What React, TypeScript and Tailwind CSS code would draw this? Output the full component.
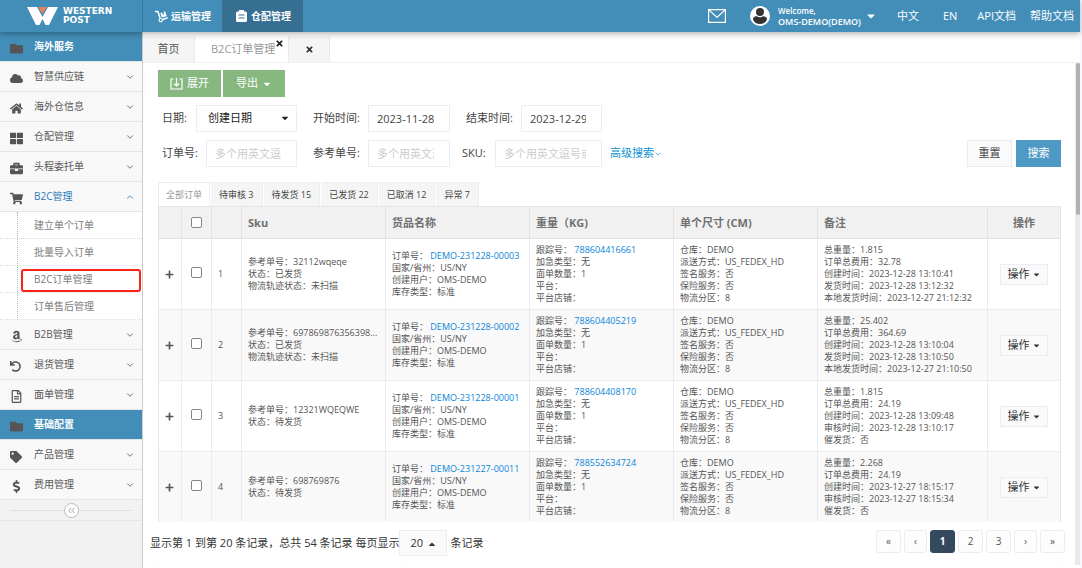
import type { ReactNode } from "react";
import {
  FaAmazon,
  FaBriefcase,
  FaCaretDown,
  FaCaretUp,
  FaCloud,
  FaDollarSign,
  FaDolly,
  FaFolder,
  FaHome,
  FaPlus,
  FaRegFileAlt,
  FaShoppingCart,
  FaTag,
  FaThLarge,
  FaTimes,
  FaUndo,
} from "react-icons/fa";
import { ChevronDown, ChevronUp, ChevronsLeft } from "lucide-react";

type Order = {
  ref: string;
  status: string;
  track?: string;
  no?: string;
  tracking?: string;
  remark: string[];
};

const orders: Order[] = [
  {
    ref: "32112wqeqe",
    status: "已发货",
    track: "未扫描",
    no: "DEMO-231228-00003",
    tracking: "788604416661",
    remark: [
      "总重量：1.815",
      "订单总费用：32.78",
      "创建时间：2023-12-28 13:10:41",
      "发货时间：2023-12-28 13:12:32",
      "本地发货时间：2023-12-27 21:12:32",
    ],
  },
  {
    ref: "697869876356398...",
    status: "已发货",
    track: "未扫描",
    no: "DEMO-231228-00002",
    tracking: "788604405219",
    remark: [
      "总重量：25.402",
      "订单总费用：364.69",
      "创建时间：2023-12-28 13:10:04",
      "发货时间：2023-12-28 13:10:50",
      "本地发货时间：2023-12-27 21:10:50",
    ],
  },
  {
    ref: "12321WQEQWE",
    status: "待发货",
    no: "DEMO-231228-00001",
    tracking: "788604408170",
    remark: [
      "总重量：1.815",
      "订单总费用：24.19",
      "创建时间：2023-12-28 13:09:48",
      "审核时间：2023-12-28 13:10:17",
      "催发货：否",
    ],
  },
  {
    ref: "698769876",
    status: "待发货",
    no: "DEMO-231227-00011",
    tracking: "788552634724",
    remark: [
      "总重量：2.268",
      "订单总费用：24.19",
      "创建时间：2023-12-27 18:15:17",
      "审核时间：2023-12-27 18:15:34",
      "催发货：否",
    ],
  },
  // 异常订单，尚未生成面单
  { ref: "698769", status: "异常", remark: [] },
];

const subMenu = ["建立单个订单", "批量导入订单", "B2C订单管理", "订单售后管理"];

const statusTabs = ["全部订单", "待审核 3", "待发货 15", "已发货 22", "已取消 12", "异常 7"];

const pages = ["«", "‹", "1", "2", "3", "›", "»"];

function Logo() {
  return (
    <svg width="31" height="18" viewBox="0 0 31 18">
      <path d="M0 0H10L15.5 10L21 0H31L22 18H18.5L15.5 12L12.5 18H9Z" fill="#fff" />
      <path d="M11.3 0H19.7L15.5 7Z" fill="#f07f55" />
    </svg>
  );
}

function ClipboardIcon() {
  return (
    <svg width="11" height="12" viewBox="0 0 11 12">
      <path d="M3 0h5v1.5h1.5A1.5 1.5 0 0 1 11 3v7.5A1.5 1.5 0 0 1 9.5 12h-8A1.5 1.5 0 0 1 0 10.5V3a1.5 1.5 0 0 1 1.500-1.500H3z" fill="#fff" />
      <path d="M2.5 5h6M2.5 8h6" stroke="#376f93" />
    </svg>
  );
}

function ExpandIcon() {
  return (
    <svg width="13" height="12" viewBox="0 0 13 12" fill="none" stroke="#fff" strokeWidth="1.2">
      <path d="M3.5 1H1v10h11V1H9.5M6.500 0v8M4 5.5l2.500 2.500L9 5.5" />
    </svg>
  );
}

function MailIcon() {
  return (
    <svg width="18" height="14" viewBox="0 0 18 14" fill="none" stroke="#fff" strokeWidth="1.2">
      <path d="M.6.6h16.8v12.8H.6zM.6.6L9 8.500L17.400.6" />
    </svg>
  );
}

function Avatar() {
  return (
    <svg width="20" height="20" viewBox="0 0 20 20">
      <circle cx="10" cy="10" r="10" fill="#fff" />
      <circle cx="10" cy="6" r="4" fill="#333" />
      <path d="M3 13.5C3 11 5.500 10.300 7 10.300C8.500 11.500 11.500 11.500 13 10.300C14.500 10.300 17 11 17 13.500C16 16.500 13 18 10 18S4 16.500 3 13.500Z" fill="#333" />
    </svg>
  );
}

function MenuItem({ icon, label, open }: { icon: ReactNode; label: string; open?: boolean }) {
  return (
    <button
      className={`flex h-[30px] w-full items-center border-b border-[#e5e5e5] bg-[#f8f8f8] pr-[7px] pl-[10px] text-left ${
        open ? "text-[#2b7dbc]" : "text-[#585858]"
      }`}
    >
      <span className="flex w-6 items-center pt-1 text-[13px] text-[#555]">{icon}</span>
      <span className="flex-1">{label}</span>
      {open ? <ChevronUp size={10} /> : <ChevronDown size={10} />}
    </button>
  );
}

function MenuTitle({ label }: { label: string }) {
  return (
    <div className="flex h-[30px] items-center border-b border-[#e5e5e5] bg-[#438eb9] pl-[10px] font-bold text-white">
      <span className="w-6 pt-1 text-[13px] text-[#555]">
        <FaFolder />
      </span>
      {label}
    </div>
  );
}

function Sidebar() {
  return (
    <aside className="w-[143px] shrink-0 border-r border-[#ccc] bg-[#f2f2f2] text-[10px]">
      <MenuTitle label="海外服务" />
      <MenuItem icon={<FaCloud />} label="智慧供应链" />
      <MenuItem icon={<FaHome />} label="海外仓信息" />
      <MenuItem icon={<FaThLarge />} label="仓配管理" />
      <MenuItem icon={<FaBriefcase />} label="头程委托单" />
      <MenuItem icon={<FaShoppingCart />} label="B2C管理" open />
      <ul className="relative bg-white">
        {subMenu.map((name) => (
          <li key={name} className="relative h-[27px] border-b border-dotted border-[#d5dde5]">
            <a href="#" className="flex h-full items-center pl-[34px] text-[#7d7d7d]">
              {name}
            </a>
            {/* 当前菜单高亮框 */}
            {name === "B2C订单管理" && (
              <span className="pointer-events-none absolute top-[3px] right-px bottom-0 left-[21px] rounded-[3px] border-2 border-[#fb2318]" />
            )}
          </li>
        ))}
        <li aria-hidden="true" className="absolute top-0 bottom-0 left-[17px] border-l border-dotted border-[#9dbdd6]" />
      </ul>
      <MenuItem icon={<FaAmazon />} label="B2B管理" />
      <MenuItem icon={<FaUndo size={11} />} label="退货管理" />
      <MenuItem icon={<FaRegFileAlt />} label="面单管理" />
      <MenuTitle label="基础配置" />
      <MenuItem icon={<FaTag size={12} />} label="产品管理" />
      <MenuItem icon={<FaDollarSign />} label="费用管理" />
      <div className="flex h-[21px] items-center border-b border-[#e5e5e5] px-[11px]">
        <span className="h-px flex-1 bg-[#ddd]" />
        <button aria-label="收起" className="flex size-[15px] items-center justify-center rounded-full border border-[#bbb] bg-white text-[#999]">
          <ChevronsLeft size={11} />
        </button>
        <span className="h-px flex-1 bg-[#ddd]" />
      </div>
    </aside>
  );
}

function Header() {
  return (
    <header className="relative z-20 flex h-8 shrink-0 items-center bg-[#438eb9] text-[11px] text-white shadow-[0_2px_6px_rgba(0,0,0,0.3)]">
      <div className="flex h-full w-[142px] shrink-0 items-center gap-[5px] pl-[27px]">
        <Logo />
        <span className="font-['DejaVu_Sans',sans-serif] text-[9px] leading-[9px] font-bold">
          WESTERN
          <br />
          POST
        </span>
      </div>
      <nav className="flex h-full text-[10px] font-bold">
        <a href="#" className="flex items-center gap-[3px] border-l border-[#3579a0] pr-[11px] pl-3">
          <FaDolly size={13} />
          运输管理
        </a>
        <a href="#" className="flex items-center gap-1 bg-[#376f93] pr-3 pl-[14px]">
          <ClipboardIcon />
          仓配管理
        </a>
      </nav>
      <div className="ml-auto flex h-full items-center pr-[6px] whitespace-nowrap">
        <button aria-label="消息">
          <MailIcon />
        </button>
        <button className="ml-6 flex items-center text-left">
          <Avatar />
          <span className="ml-2 text-[9px] leading-[11px] font-semibold">
            <span className="block text-[8px]">Welcome,</span>
            OMS-DEMO(DEMO)
          </span>
          <FaCaretDown size={12} className="ml-1" />
        </button>
        <a href="#" className="ml-5">中文</a>
        <a href="#" className="ml-6">EN</a>
        <a href="#" className="ml-5">API文档</a>
        <a href="#" className="ml-[14px]">帮助文档</a>
      </div>
    </header>
  );
}

function PageTabs() {
  return (
    <div className="flex h-[31px] shrink-0 items-end border-b border-[#eef0f8] bg-white text-[11px]">
      <button className="h-[26px] w-[52px] border-r border-[#e8eaf2] bg-[#f5f5f5] text-[#555]">首页</button>
      <button className="relative ml-px h-[26px] border-r border-[#e8eaf2] bg-white pr-[13px] pl-[15px] text-[#999]">
        B2C订单管理
        <FaTimes size={9} className="absolute top-[3px] right-1 text-[#222]" />
      </button>
      <button aria-label="关闭" className="flex h-[26px] w-[41px] items-center justify-center border-r border-[#e8eaf2] bg-[#f5f5f5] text-[#333]">
        <FaTimes size={9} />
      </button>
    </div>
  );
}

function Field({ id, label, value, width, gap }: { id: string; label: string; value?: string; width: string; gap: string }) {
  return (
    <div className={`flex items-center justify-between ${gap}`}>
      <label htmlFor={id}>{label}</label>
      <input
        id={id}
        defaultValue={value}
        placeholder="多个用英文逗号或空格隔开"
        className={`h-[27px] border border-[#ececf5] bg-white pr-[15px] pl-2 text-[#444] placeholder:text-[#ccc] ${width}`}
      />
    </div>
  );
}

function Filters() {
  return (
    <form className="text-[11px] text-[#444]">
      <div className="flex gap-[2px]">
        <button type="button" className="flex h-[27px] w-[63px] items-center justify-center gap-1 bg-[#87b87f] text-white">
          <ExpandIcon />
          展开
        </button>
        <button type="button" className="flex h-[27px] w-[62px] items-center justify-center gap-1 bg-[#87b87f] text-white">
          导出
          <FaCaretDown size={10} />
        </button>
      </div>
      <div className="mt-2 flex gap-4 pl-1">
        <div className="flex w-[135px] items-center justify-between">
          <label htmlFor="dateType">日期:</label>
          <div className="relative">
            <select id="dateType" className="h-[27px] w-[101px] appearance-none border border-[#ececf5] bg-white pl-[11px] text-[#222]">
              <option>创建日期</option>
            </select>
            <FaCaretDown size={10} className="pointer-events-none absolute top-2 right-[7px] text-[#222]" />
          </div>
        </div>
        <Field id="from" label="开始时间:" value="2023-11-28" width="w-[82px]" gap="w-[137px]" />
        <Field id="to" label="结束时间:" value="2023-12-29" width="w-[81px]" gap="w-[136px]" />
      </div>
      <div className="mt-2 flex items-center pl-1">
        <Field id="orderNo" label="订单号:" width="w-[91px]" gap="mr-4 w-[135px]" />
        <Field id="refNo" label="参考单号:" width="w-[82px]" gap="mr-3 w-[137px]" />
        <Field id="sku" label="SKU:" width="w-[107px]" gap="w-[140px]" />
        <a href="#" className="ml-2 flex items-center text-[#0a93cf]">
          高级搜索
          <ChevronDown size={8} />
        </a>
        <div className="ml-auto flex gap-1">
          <button type="reset" className="h-[27px] w-[45px] border border-[#ececf0] bg-[#fafafa]">重置</button>
          <button type="button" className="h-[27px] w-[45px] bg-[#4f99c6] text-white">搜索</button>
        </div>
      </div>
    </form>
  );
}

function CheckBox({ label }: { label: string }) {
  return (
    <input
      type="checkbox"
      aria-label={label}
      className="block size-[11px] appearance-none rounded-[2px] border border-[#858585] bg-white"
    />
  );
}

function OrderRow({ order, index }: { order: Order; index: number }) {
  const cell = "border-r border-b border-[#ececf0] px-[6px]";
  const failed = order.status === "异常";
  return (
    <tr className={`odd:bg-white even:bg-[#f9f9f9] ${failed ? "h-[107px]" : "h-[71px]"}`}>
      <td className={cell}>
        <button aria-label="展开明细" className="block">
          <FaPlus size={9} />
        </button>
      </td>
      <td className="border-r border-b border-[#ececf0] pb-1 pl-[9px]">
        <CheckBox label={`选择第 ${index + 1} 行`} />
      </td>
      <td className={cell}>{index + 1}</td>
      <td className={`${cell} whitespace-nowrap ${failed ? "text-red-500" : ""}`}>
        <div>参考单号：{order.ref}</div>
        <div>状态：{order.status}</div>
        {order.track && <div>物流轨迹状态：{order.track}</div>}
      </td>
      <td className={`${cell} whitespace-nowrap`}>
        {order.no && (
          <>
            <div>
              订单号： <a href="#" className="text-[#0a85d9]">{order.no}</a>
            </div>
            <div>国家/省州：US/NY</div>
          </>
        )}
        <div>创建用户：OMS-DEMO</div>
        <div>库存类型：标准</div>
      </td>
      <td className={cell}>
        {order.tracking && (
          <>
            <div>
              跟踪号： <a href="#" className="text-[#0a85d9]">{order.tracking}</a>
            </div>
            <div>加急类型：无</div>
            <div>面单数量：1</div>
            <div>平台：</div>
            <div>平台店铺：</div>
          </>
        )}
      </td>
      <td className={cell}>
        {order.tracking && (
          <>
            <div>仓库：DEMO</div>
            <div>派送方式：US_FEDEX_HD</div>
            <div>签名服务：否</div>
            <div>保险服务：否</div>
            <div>物流分区：8</div>
          </>
        )}
      </td>
      <td className={`${cell} whitespace-nowrap`}>
        {order.remark.map((line) => (
          <div key={line}>{line}</div>
        ))}
      </td>
      <td className="border-b border-[#ececf0]">
        <button className="mx-auto flex h-[21px] w-12 items-center justify-center gap-[2px] border border-[#ececf5] bg-[#fafafa] text-[11px] text-[#333]">
          操作
          <FaCaretDown size={9} />
        </button>
      </td>
    </tr>
  );
}

function OrderTable() {
  const head = "border-r border-b border-[#e2e2e6] px-[6px]";
  return (
    <table className="w-full table-fixed border-separate border-spacing-0 border-x border-t border-[#e4e4ec] text-[9px] leading-[12px] text-[#555]">
      <colgroup>
        <col className="w-[23px]" />
        <col className="w-[30px]" />
        <col className="w-[30px]" />
        <col />
        <col />
        <col />
        <col />
        <col className="w-[170px]" />
        <col className="w-[72px]" />
      </colgroup>
      <thead>
        <tr className="h-8 bg-[#f1f1f1] text-left text-[11px] text-[#707070]">
          <th className={head} />
          <th className="border-r border-b border-[#e2e2e6] pl-[9px]">
            <CheckBox label="全选" />
          </th>
          <th className={head} />
          <th className={head}>Sku</th>
          <th className={head}>货品名称</th>
          <th className={head}>重量（KG)</th>
          <th className={head}>单个尺寸 (CM)</th>
          <th className={head}>备注</th>
          <th className="border-b border-[#e2e2e6] text-center">操作</th>
        </tr>
      </thead>
      <tbody>
        {orders.map((order, i) => (
          <OrderRow key={order.ref} order={order} index={i} />
        ))}
      </tbody>
    </table>
  );
}

function Pager() {
  return (
    <div className="absolute inset-x-0 bottom-px flex h-[42px] items-start bg-white pt-2 pr-[15px] pl-[7px] text-[11px] text-[#333]">
      <label htmlFor="pageSize" className="leading-[26px]">
        显示第 1 到第 20 条记录，总共 54 条记录 每页显示
      </label>
      <div className="relative mr-[3px]">
        <select id="pageSize" className="h-[26px] w-12 appearance-none border border-[#ececf5] bg-[#fafafa] pl-[10px]">
          <option>20</option>
        </select>
        <FaCaretUp size={10} className="pointer-events-none absolute top-[9px] right-[10px]" />
      </div>
      <span className="leading-[26px]">条记录</span>
      <nav className="ml-auto flex gap-[3px] text-[10px]">
        {pages.map((p) => (
          <button
            key={p}
            className={`h-[23px] rounded-[3px] border ${/[‹›]/.test(p) ? "w-[23px]" : "w-[25px]"} ${
              p === "1" ? "border-[#34495e] bg-[#34495e] font-bold text-white" : "border-[#ececf2] bg-[#fdfdfd] text-[#555]"
            }`}
          >
            {p}
          </button>
        ))}
      </nav>
    </div>
  );
}

export default function App() {
  return (
    <div className="h-screen bg-[#f8f8ff] pr-[2px] font-['Open_Sans','Noto_Sans_CJK_SC',sans-serif]">
      <div className="flex h-full flex-col">
        <Header />
        <div className="flex min-h-0 flex-1">
          <Sidebar />
          <main className="flex min-w-0 flex-1 flex-col bg-white pb-[3px]">
            <PageTabs />
            <div className="relative flex min-h-0 flex-1">
              <div className="min-w-0 flex-1 overflow-hidden pt-[7px] pr-[14px] pl-[15px]">
                <Filters />
                <div className="mt-[15px] flex gap-px text-[9px] text-[#444]">
                  {statusTabs.map((tab, i) => (
                    <button
                      key={tab}
                      className={`h-6 border-t border-r border-[#eceef5] whitespace-nowrap ${
                        i === 0 ? "border-l bg-white px-[7px] text-[#999]" : "bg-[#f5f5f5] px-2"
                      }`}
                    >
                      {tab}
                    </button>
                  ))}
                </div>
                <OrderTable />
              </div>
              {/* 滚动条 */}
              <div className="z-10 w-[5px] shrink-0 bg-[#e9e9e9]" aria-hidden="true">
                <div className="mx-auto h-[152px] w-[4px] rounded-full bg-[#b0b0b0]" />
              </div>
              <Pager />
            </div>
          </main>
        </div>
      </div>
    </div>
  );
}
